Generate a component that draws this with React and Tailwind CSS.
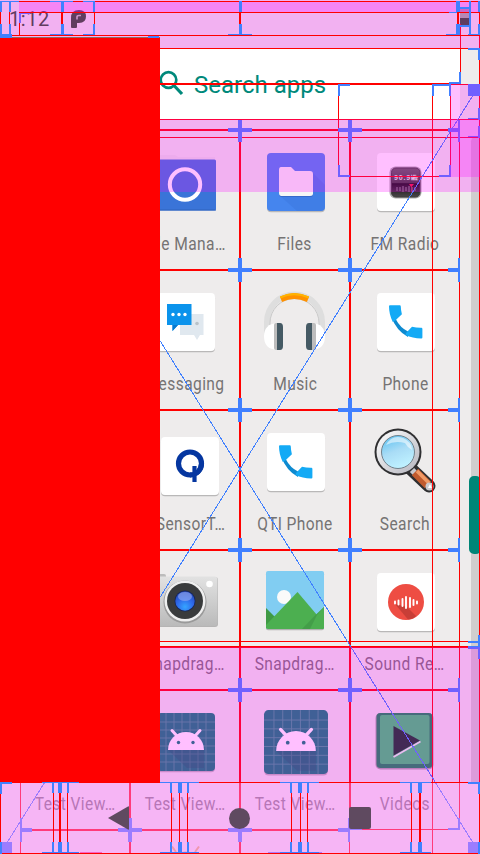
import React from "react";

const RED = "#ff0000";
const BLUE = "#4080ff";

/* Icons are drawn in a 64x64 box whose centre is the cell's icon centre. */
function Svg({ children }) {
  return (
    <svg viewBox="0 0 64 64" className="block h-16 w-16 overflow-visible">
      {children}
    </svg>
  );
}

function Tile({ x = 4, y = 3, s = 58, fill = "#fff" }) {
  return (
    <g>
      <rect x={x} y={y + 1.3} width={s} height={s} rx="4" fill="#000" opacity=".22" />
      <rect x={x} y={y} width={s} height={s} rx="4" fill={fill} />
    </g>
  );
}

function FileManagerIcon() {
  return (
    <Svg>
      <path d="M6 5 H22 L25 7 H62 V14 H6Z" fill="#e7e5e7" />
      <rect x="3" y="9.5" width="60" height="51" rx="1.5" fill="#3a74d8" />
      <rect x="3" y="59.5" width="60" height="1" rx=".5" fill="#2f62bb" />
      <circle cx="32" cy="34.5" r="15.2" fill="none" stroke="#fff" strokeWidth="4" />
    </Svg>
  );
}

function FilesIcon() {
  return (
    <Svg>
      <Tile fill="#4585ee" />
      <path d="M49 22 L62 35 V57 Q61 61 57 61 H34 L17 46Z" fill="#2e62c9" opacity=".2" />
      <path d="M16 20 Q16 17 18 17 H28 L32 21 H47 Q50 21 50 24 V43.500 Q50 46 47 46 H18.500 Q16 46 16 43Z" fill="#2a55b0" opacity=".5" transform="translate(0 1)" />
      <path d="M16 20 Q16 17 18 17 H28 L32 21 H47 Q50 21 50 24 V43.500 Q50 46 47 46 H18.500 Q16 46 16 43Z" fill="#f6f6f6" />
    </Svg>
  );
}

function RadioIcon() {
  return (
    <Svg>
      <defs>
        <linearGradient id="radio" x1="0" y1="0" x2="0" y2="1">
          <stop offset="0" stopColor="#5c6058" />
          <stop offset=".52" stopColor="#3a3d36" />
          <stop offset=".56" stopColor="#0e100c" />
          <stop offset="1" stopColor="#4a464a" />
        </linearGradient>
      </defs>
      <Tile />
      <rect x="16.500" y="16.500" width="32" height="32" rx="6" fill="#a9a9a9" />
      <rect x="18.500" y="18" width="28.500" height="29" rx="4.500" fill="url(#radio)" stroke="#3c3d3a" />
      <text x="21" y="30" fontSize="7" fontFamily="Liberation Sans, sans-serif" fontWeight="bold" fill="#e4ece0" textLength="24">90.9㎒</text>
      <path d="M19 34H47" stroke="#0e100c" strokeWidth="1.500" />
      <path d="M24 37v4M27 37v4M30 36v6M33 37v4M36 36v6M39 37v4M42 37v4" stroke="#8d858b" />
      <path d="M36 34h5l-2.500 3v6h-.5v-6Z" fill="#f0183c" />
    </Svg>
  );
}

function MessagingIcon() {
  return (
    <Svg>
      <Tile />
      <path d="M27 24H50.500V45H47L44 50L41 45H27Z" fill="#e0e8ef" />
      <circle cx="44" cy="33.500" r="1.800" fill="#b8c2c9" />
      <path d="M15 14H38.500V35H25L19.500 41V35H14V14Z" fill="#0b93ec" />
      <path d="M19.500 35H25L19.500 41Z" fill="#0779cf" />
      <circle cx="20" cy="24.500" r="1.700" fill="#fff" />
      <circle cx="26" cy="24.500" r="1.700" fill="#fff" />
      <circle cx="32" cy="24.500" r="1.700" fill="#fff" />
    </Svg>
  );
}

function MusicIcon() {
  return (
    <Svg>
      <path d="M4 45 V32 A27.500 27.500 0 0 1 59 32 V45" fill="none" stroke="#dedede" strokeWidth="6" />
      <path d="M7 45 V33 A24.500 24.500 0 0 1 56 33 V45" fill="none" stroke="#cacaca" strokeWidth="1" />
      <path d="M17 6.500 Q31 -.5 46 6.500 L44 12 Q31 6 19 12Z" fill="#ff9100" />
      <path d="M17 6.500 Q31 -.5 46 6.500 L45.500 8.500 Q31 2 17.500 8.500Z" fill="#ffb300" />
      <path d="M14 33 Q1 34 1 46.500 Q1 59 14 60Z" fill="#fff" />
      <rect x="11" y="33" width="7" height="27" rx="2" fill="#bdbdbd" />
      <path d="M14 33h3q3 0 3 4v19q0 4-3 4h-3Z" fill="#455a64" />
      <path d="M49 33 Q62 34 62 46.500 Q62 59 49 60Z" fill="#fff" />
      <rect x="46" y="33" width="7" height="27" rx="2" fill="#bdbdbd" />
      <path d="M49 33h-3q-3 0-3 4v19q0 4 3 4h3Z" fill="#455a64" />
    </Svg>
  );
}

function PhoneIcon() {
  return (
    <Svg>
      <Tile />
      <path d="M18 26 L23 29.500 Q27 37.500 35 41.500 L35 47 Q23 40.500 18 26Z" fill="#0e8ad0" />
      <path d="M17 15.300H26.800Q27.700 15.300 27.800 16.500Q27.900 20.500 28.900 24.300L22.300 30.500L19.800 32Q16 24.500 16 16.300Q16 15.300 17 15.300Z" fill="#14aaf5" />
      <path d="M32.800 43.300L39 36.700Q43.500 37.800 48.300 37.700Q49.400 37.700 49.400 38.900V47.400Q49.400 48.500 48.300 48.500Q39.500 48.200 32.500 45Z" fill="#14aaf5" />
    </Svg>
  );
}

function QIcon() {
  return (
    <Svg>
      <Tile x={8} y={7} />
      <circle cx="37" cy="33.500" r="11.500" fill="none" stroke="#0536a0" strokeWidth="5.200" />
      <path d="M41.500 36V52" stroke="#fff" strokeWidth="6" />
      <path d="M48.500 34 A11.500 11.500 0 0 1 37 45" fill="none" stroke="#0536a0" strokeWidth="5" />
      <path d="M41.500 36V52" stroke="#0536a0" strokeWidth="4.200" />
    </Svg>
  );
}

function MagnifierIcon() {
  return (
    <Svg>
      <defs>
        <linearGradient id="lens" x1="0" y1="0" x2=".4" y2="1">
          <stop offset="0" stopColor="#51bdf0" />
          <stop offset=".55" stopColor="#a9dcf6" />
          <stop offset="1" stopColor="#bdf0ff" />
        </linearGradient>
        <linearGradient id="rim" x1="0" y1="0" x2="1" y2="1">
          <stop offset="0" stopColor="#fff" />
          <stop offset="1" stopColor="#b4b4bd" />
        </linearGradient>
      </defs>
      <path d="M38 39 L56 56" stroke="#2f2f31" strokeWidth="13" strokeLinecap="round" />
      <circle cx="25" cy="22" r="23.500" fill="#2f2f31" />
      <circle cx="25" cy="22" r="21.500" fill="url(#rim)" />
      <circle cx="25" cy="22" r="16.500" fill="url(#lens)" stroke="#73818b" strokeWidth="1" />
      <path d="M13 15 Q19 4 30 8 Q39 12 39 20 Q34 17 32 13 Q22 10 13 15Z" fill="#fff" opacity=".55" />
      <path d="M39 40 L44 45" stroke="#c7c8ce" strokeWidth="6" />
      <path d="M42 42 L55 55" stroke="#c05a2e" strokeWidth="9" />
      <path d="M44 41 L56 53" stroke="#f19a66" strokeWidth="3.500" />
      <circle cx="56.500" cy="56.500" r="4" fill="#c9c9ce" />
      <path d="M57 54 L59 58 L55 58Z" fill="#fff" />
    </Svg>
  );
}

function CameraIcon() {
  return (
    <Svg>
      <defs>
        <linearGradient id="body" x1="0" y1="0" x2="0" y2="1">
          <stop offset="0" stopColor="#e2e2e2" />
          <stop offset="1" stopColor="#bababa" />
        </linearGradient>
        <radialGradient id="glass" cx=".5" cy=".8" r=".8">
          <stop offset="0" stopColor="#35a5ff" />
          <stop offset=".5" stopColor="#2f6cec" />
          <stop offset="1" stopColor="#2545b6" />
        </radialGradient>
      </defs>
      <rect x="4" y="4" width="9" height="5" rx="2" fill="#bcbcbc" />
      <rect x="-1" y="7" width="66" height="50" rx="3" fill="#909090" opacity=".6" />
      <rect x="-1" y="6.500" width="65.500" height="49.500" rx="3" fill="url(#body)" />
      <circle cx="32" cy="32" r="21.500" fill="#9a9a9a" />
      <circle cx="32" cy="31" r="20.500" fill="#efefef" />
      <circle cx="32" cy="31" r="18" fill="#393b3c" />
      <circle cx="32" cy="31" r="10.500" fill="#172656" />
      <circle cx="32" cy="31" r="9.700" fill="url(#glass)" />
      <ellipse cx="32" cy="26.500" rx="7" ry="4.500" fill="#90a8ef" opacity=".65" />
      <circle cx="56.500" cy="14" r="3.300" fill="#fff" />
    </Svg>
  );
}

function GalleryIcon() {
  return (
    <Svg>
      <defs>
        <clipPath id="picture">
          <rect x="3" y="1" width="58" height="58" rx="2" />
        </clipPath>
      </defs>
      <rect x="3" y="2.200" width="58" height="58" rx="2" opacity=".25" />
      <g clipPath="url(#picture)">
        <rect x="3" y="1" width="58" height="58" fill="#81cdf2" />
        <circle cx="21" cy="27" r="7" fill="#fafafa" />
        <path d="M-8 59 L3 38 L12 47 L3 59Z" fill="#3f9a44" />
        <path d="M3 59 V55 L34.500 22 L66 59Z" fill="#4caf50" />
        <path d="M39 59 L53 44.500 L61 37 V59Z" fill="#439e48" />
        <path d="M54 45 L61 37 V59 H47Z" fill="#4caf50" />
      </g>
    </Svg>
  );
}

function RecorderIcon() {
  return (
    <Svg>
      <Tile />
      <circle cx="33" cy="32" r="18" fill="#ee4d43" />
      <path d="M22 34 L35 49.500 Q41 49 43 46 L34 37Z" fill="#a9332d" opacity=".55" />
      <path d="M22 31.500v2M25.500 30.500v4M29.500 29v7M33 27v11M37 28v9M40.500 30v5M44 31.500v2" stroke="#fff" strokeWidth="1.900" strokeLinecap="round" />
    </Svg>
  );
}

function AndroidIcon({ big }) {
  const lines = [12, 20, 28, 36, 44, 52];
  return (
    <Svg>
      <g transform={big ? "translate(-3.400 -3.200) scale(1.103)" : undefined}>
        <Tile fill="#008073" />
        {lines.map((p) => (
          <path key={p} d={`M${p + 1} 3V61M4 ${p}H62`} stroke="#3f9f93" strokeWidth=".8" />
        ))}
        <path d="M15 40 L34 58 H51V40Z" fill="#0b5a58" opacity=".3" />
        <path d="M15 40 A18 18 0 0 1 51 40Z" fill="#fff" />
        <path d="M24 26 L19 20.500M42 26 L47 20.500" stroke="#fff" strokeWidth="3" strokeLinecap="round" />
        <circle cx="25.500" cy="32.500" r="1.700" fill="#008073" />
        <circle cx="40" cy="32.500" r="1.700" fill="#008073" />
      </g>
    </Svg>
  );
}

function VideosIcon() {
  return (
    <Svg>
      <rect x="2.500" y="3" width="58" height="56.500" rx="5" fill="#000" opacity=".3" />
      <rect x="3.500" y="3" width="56" height="55" rx="4" fill="#088f50" />
      <rect x="7" y="5" width="49.500" height="49" rx="2" fill="#32cf6f" />
      <path d="M20.500 47 L47.500 31.500" stroke="#e4f8ec" strokeWidth="1.700" />
      <path d="M20.500 16 L47 30.500 L20.500 45.500Z" fill="#04381c" />
    </Svg>
  );
}

const apps = [
  null,
  ["File Mana…", <FileManagerIcon />],
  ["Files", <FilesIcon />],
  ["FM Radio", <RadioIcon />],
  null,
  ["Messaging", <MessagingIcon />],
  ["Music", <MusicIcon />],
  ["Phone", <PhoneIcon />],
  null,
  ["QSensorT…", <QIcon />],
  ["QTI Phone", <PhoneIcon />],
  ["Search", <MagnifierIcon />],
  null,
  ["Snapdrag…", <CameraIcon />],
  ["Snapdrag…", <GalleryIcon />],
  ["Sound Re…", <RecorderIcon />],
  ["Test View…", null],
  ["Test View…", <AndroidIcon />],
  ["Test View…", <AndroidIcon big />],
  ["Videos", <VideosIcon />],
];

function AppCell({ app }) {
  return (
    <div className="flex h-[140px] flex-col items-center pt-5">
      {app && (
        <>
          <div className="h-16 w-16">{app[1]}</div>
          <div className="mt-[18px] scale-x-[0.84] whitespace-nowrap text-[18.5px] leading-6 tracking-[0.5px] text-[#757373]">
            {app[0]}
          </div>
        </>
      )}
    </div>
  );
}

/* Red outline with blue corner marks, one pixel inside the given bounds. */
function Bounds({ x, y, w, h, len = 12 }) {
  const lx = Math.min(len, w);
  const ly = Math.min(len, h);
  const r = x + w;
  const b = y + h;
  return (
    <g>
      <path fill={RED} d={`M${x} ${y}h${w}v1h${-w}zM${x} ${b - 1}h${w}v1h${-w}zM${x} ${y}h1v${h}h-1zM${r - 1} ${y}h1v${h}h-1z`} />
      <path
        fill={BLUE}
        d={`M${x} ${y}h${lx}v2h${-lx}zM${x} ${y}h2v${ly}h-2zM${r - lx} ${y}h${lx}v2h${-lx}zM${r - 2} ${y}h2v${ly}h-2zM${x} ${b - 2}h${lx}v2h${-lx}zM${x} ${b - ly}h2v${ly}h-2zM${r - lx} ${b - 2}h${lx}v2h${-lx}zM${r - 2} ${b - ly}h2v${ly}h-2z`}
      />
    </g>
  );
}

function Bars({ fill, rects }) {
  return rects.map(([x, y, w, h], i) => <rect key={i} x={x} y={y} width={w} height={h} fill={fill} />);
}

function ContentBounds() {
  const cells = [];
  for (let row = 0; row < 6; row++)
    for (let col = 0; col < 4; col++) {
      if (row === 5 && col === 3) continue;
      cells.push(<Bounds key={`${row}-${col}`} x={20 + col * 110} y={130 + row * 140} w={110} h={140} />);
    }
  return (
    <svg viewBox="0 0 480 854" shapeRendering="crispEdges" className="pointer-events-none absolute inset-0 h-[854px] w-[480px]">
      <Bars
        fill={RED}
        rects={[
          [160, 48, 320, 1], [160, 83, 300, 2], [460, 84, 20, 1], [160, 119, 320, 1], [160, 129, 300, 2], [160, 137, 320, 1],
          [460, 24, 1, 60], [338, 84, 1, 92], [450, 84, 1, 92], [338, 176, 112, 1], [432, 84, 1, 770],
          [479, 36, 1, 746], [160, 641, 320, 1], [160, 646, 320, 2],
        ]}
      />
      {cells}
      <Bars
        fill={BLUE}
        rects={[
          [449, 82, 12, 2], [459, 72, 2, 12],
          [338, 84, 12, 2], [338, 84, 2, 12], [432, 84, 18, 2], [432, 84, 2, 12], [449, 84, 2, 12],
          [338, 165, 2, 12], [338, 175, 12, 2], [449, 165, 2, 12], [439, 175, 12, 2],
          [468, 48, 12, 2], [478, 48, 2, 12], [468, 84, 12, 12], [478, 108, 2, 12], [468, 118, 12, 1],
          [478, 126, 2, 12], [468, 136, 12, 1], [238, 120, 4, 12], [348, 120, 4, 12], [458, 120, 2, 12],
          [228, 128, 24, 4], [338, 128, 24, 4], [448, 128, 12, 4],
          [468, 641, 12, 2], [468, 646, 12, 3], [478, 635, 2, 24],
          [0, 842, 12, 12], [468, 842, 12, 12],
        ]}
      />
      <path d="M0 84L480 854M480 84L0 854" stroke={BLUE} strokeWidth="1" />
    </svg>
  );
}

function SystemBounds() {
  return (
    <svg viewBox="0 0 480 854" shapeRendering="crispEdges" className="pointer-events-none absolute inset-0 h-[854px] w-[480px]">
      <Bars
        fill={RED}
        rects={[
          [0, 1, 480, 1], [19, 12, 461, 1], [0, 35, 480, 1], [0, 1, 1, 34], [9, 1, 1, 34], [19, 12, 1, 23],
          [61, 1, 2, 34], [94, 1, 1, 34], [239, 1, 2, 34], [457, 1, 2, 34], [469, 1, 2, 34], [479, 1, 1, 34],
          [0, 782, 480, 1], [0, 853, 480, 1], [0, 782, 1, 72], [479, 782, 1, 72],
          [53, 782, 1, 72], [59, 782, 2, 72], [67, 782, 1, 72],
          [171, 782, 1, 72], [179, 782, 1, 72], [187, 782, 1, 72],
          [291, 782, 1, 72], [300, 782, 1, 72], [307, 782, 1, 72],
          [411, 782, 1, 72], [419, 782, 2, 72],
        ]}
      />
      <Bars
        fill={BLUE}
        rects={[
          [0, 1, 19, 1], [0, 1, 2, 11], [9, 1, 2, 11], [0, 24, 2, 12], [9, 24, 2, 12], [0, 34, 12, 4],
          [50, 1, 23, 1], [61, 1, 3, 11], [61, 24, 3, 11], [50, 34, 12, 1], [64, 34, 9, 1],
          [83, 1, 12, 1], [93, 1, 2, 11], [93, 24, 2, 11], [83, 34, 12, 1],
          [239, 1, 3, 11], [239, 24, 3, 11], [228, 34, 24, 1],
          [446, 34, 12, 1], [456, 1, 4, 11], [456, 24, 4, 11], [449, 12, 8, 1],
          [460, 7, 9, 2], [460, 25, 9, 2], [469, 1, 2, 34], [478, 1, 2, 11], [478, 24, 2, 11], [468, 34, 12, 1],
          [148, 36, 11, 2],
          [0, 782, 12, 2], [0, 782, 2, 12], [0, 842, 2, 12], [468, 782, 12, 2], [478, 782, 2, 12], [478, 842, 2, 12],
          [42, 782, 37, 1], [42, 852, 37, 1], [160, 782, 39, 1], [160, 852, 39, 1],
          [280, 782, 39, 1], [280, 852, 39, 1], [400, 782, 31, 1], [400, 852, 31, 1],
          [52, 782, 2, 11], [58, 782, 4, 11], [67, 782, 2, 11], [52, 842, 2, 11], [58, 842, 4, 11], [67, 842, 2, 11],
          [170, 782, 2, 11], [178, 782, 4, 11], [187, 782, 2, 11], [170, 842, 2, 11], [178, 842, 4, 11], [187, 842, 2, 11],
          [290, 782, 2, 11], [298, 782, 4, 11], [307, 782, 2, 11], [290, 842, 2, 11], [298, 842, 4, 11], [307, 842, 2, 11],
          [410, 782, 2, 11], [418, 782, 4, 11], [410, 842, 2, 11], [418, 842, 4, 11],
        ]}
      />
      <rect x="19" y="13" width="11" height="1" fill="#7a60ff" />
      <rect x="19" y="13" width="2" height="10" fill="#7a60ff" />
    </svg>
  );
}

export default function App() {
  return (
    <div className="relative h-[854px] w-[480px] overflow-hidden bg-[#eeecec] font-['Roboto',sans-serif]">
      <div className="flex h-[854px] flex-col overflow-hidden">
        <header className="flex h-9 shrink-0 items-center pl-[9px] text-[#2b5129]">
          <span className="mt-[2px] w-[62px] text-[20px] leading-9 tracking-[0.6px]">1:12</span>
          <svg viewBox="0 0 16 20" className="mt-[2px] h-5 w-4">
            <path d="M0 18V9Q0 1 8 1Q15 1 15 7.500Q15 14 8 14H6V18Q6 19 5 19H1Q0 19 0 18Z" fill="#2b5129" />
            <path d="M6 10.500V8Q6 6.500 8 6.500H10" fill="none" stroke="#b9c4b6" strokeWidth="1.600" />
          </svg>
          <span className="ml-auto mr-[11px] mt-[-2px] flex h-4 w-[9px] flex-col bg-[#a0b59c]">
            <span className="mt-auto h-[7px] bg-[#2b5129]" />
          </span>
        </header>
        <div className="ml-5 mt-3 flex h-[71px] w-[440px] shrink-0 items-center bg-white pl-[133px] text-[#00897b]">
          <svg viewBox="0 0 32 32" className="mt-[-5px] h-8 w-8">
            <circle cx="15.500" cy="15" r="7.800" fill="none" stroke="currentColor" strokeWidth="2.700" />
            <path d="M21 20.500L29 29" stroke="currentColor" strokeWidth="3.200" />
          </svg>
          <span className="ml-[9px] mt-[3px] whitespace-nowrap text-[24px] leading-8">Search apps</span>
        </div>
        <main className="flex shrink-0">
          <section className="ml-5 mt-[11px] grid w-[440px] shrink-0 grid-cols-4">
            {apps.map((app, i) => (
              <AppCell key={i} app={app} />
            ))}
          </section>
          <aside className="ml-[9px] mt-[18px] flex h-[645px] w-[11px] flex-col items-end">
            <div className="flex h-full w-[9px] flex-col items-end rounded-t-full rounded-b bg-[#d0cece]">
              <div className="mt-[339px] h-[78px] w-[11px] shrink-0 rounded-l-[5px] rounded-r bg-[#008577]" />
            </div>
          </aside>
        </main>
        <footer className="flex shrink-0 pl-[80px]">
          <svg viewBox="0 0 250 24" className="h-6 w-[250px]">
            <path d="M0 22.500H22" stroke="#f0508c" strokeWidth="1" />
            <path d="M92 16.500L96 22M119 16.500L115 22" stroke="#e2b060" strokeWidth="2" />
            <path d="M96 24Q105 19 115 24Z" fill="#e2b060" />
            <path d="M188 22.500H242" stroke="#5b82f0" strokeWidth="1" />
          </svg>
        </footer>
      </div>

      <ContentBounds />

      <div className="absolute left-0 top-[782px] h-[72px] w-[480px] bg-white/30" />
      <div className="absolute left-0 top-0 h-12 w-[480px] bg-[#ff00ff]/25" />
      <div className="absolute left-[19px] top-[2px] h-[10px] w-[461px] bg-[#ff00ff]/25" />
      <div className="absolute left-[450px] top-[84px] h-[93px] w-[30px] bg-[#ff00ff]/25" />
      <div className="absolute left-0 top-[119px] h-[73px] w-[480px] bg-[#ff00ff]/25" />
      <div className="absolute left-0 top-[647px] h-[207px] w-[480px] bg-[#ff00ff]/25" />
      <div className="absolute left-0 top-[37px] h-[745px] w-40 border-t border-[#8b6b65] bg-[#ff0000]" />

      <nav className="absolute left-0 top-[782px] flex h-[72px] w-[480px] items-center pl-[107px] text-[#5f4a60]">
        <svg viewBox="0 0 24 24" className="h-6 w-6">
          <path d="M1 12L21 .5Q22 0 22 1V23Q22 24 21 23.500Z" fill="currentColor" />
        </svg>
        <span className="ml-[98px] h-[21px] w-[21px] rounded-full bg-[#5f4a60]" />
        <span className="ml-[99px] h-[22px] w-[22px] rounded-[2px] bg-[#5f4a60]" />
      </nav>

      <SystemBounds />
    </div>
  );
}
